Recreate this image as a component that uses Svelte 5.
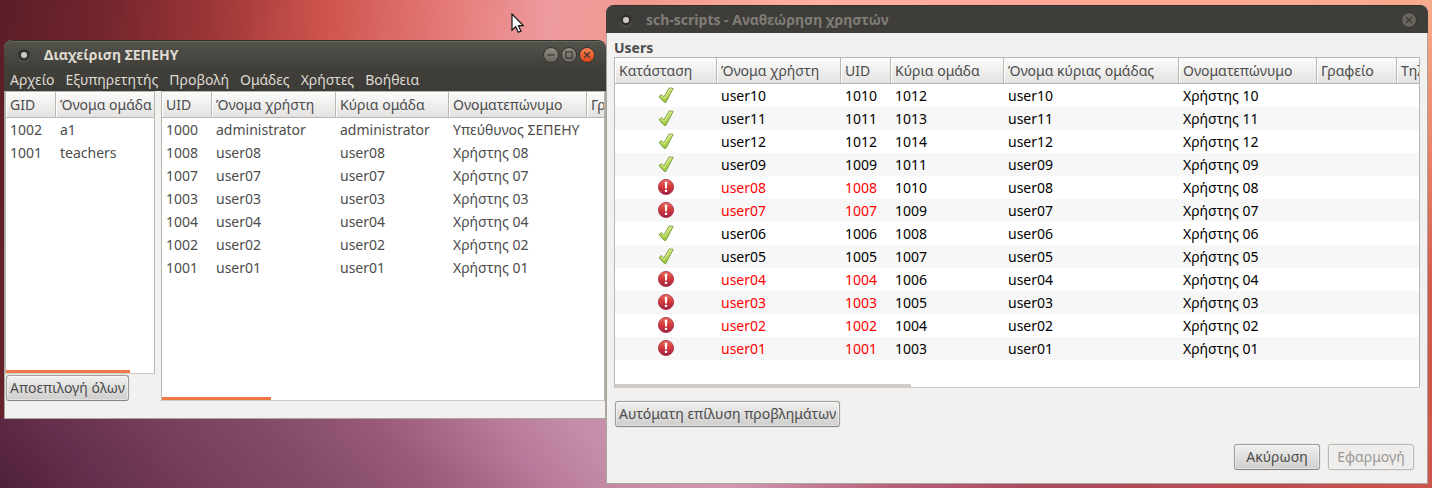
<script>
  const menus = ['Αρχείο', 'Εξυπηρετητής', 'Προβολή', 'Ομάδες', 'Χρήστες', 'Βοήθεια'];

  const groups = [
    ['1002', 'a1'],
    ['1001', 'teachers']
  ];

  const accounts = [
    ['1000', 'administrator', 'administrator', 'Υπεύθυνος ΣΕΠΕΗΥ'],
    ...['08', '07', '03', '04', '02', '01'].map((n) => ['10' + n, 'user' + n, 'user' + n, 'Χρήστης ' + n])
  ];

  const review = [
    { n: '10', gid: '1012', ok: true },
    { n: '11', gid: '1013', ok: true },
    { n: '12', gid: '1014', ok: true },
    { n: '09', gid: '1011', ok: true },
    { n: '08', gid: '1010', ok: false },
    { n: '07', gid: '1009', ok: false },
    { n: '06', gid: '1008', ok: true },
    { n: '05', gid: '1007', ok: true },
    { n: '04', gid: '1006', ok: false },
    { n: '03', gid: '1005', ok: false },
    { n: '02', gid: '1004', ok: false },
    { n: '01', gid: '1003', ok: false }
  ];
</script>

<div class="desktop">
  <section class="window main" aria-label="Διαχείριση ΣΕΠΕΗΥ">
    <header class="titlebar">
      <span class="dot"></span>
      <h1>Διαχείριση ΣΕΠΕΗΥ</h1>
      <button class="ctl" aria-label="Ελαχιστοποίηση">
        <svg viewBox="0 0 16 16"><path d="M4 8h8" /></svg>
      </button>
      <button class="ctl" aria-label="Μεγιστοποίηση">
        <svg viewBox="0 0 16 16"><path d="M4.5 4.5h7v7h-7z" /></svg>
      </button>
      <button class="ctl close" aria-label="Κλείσιμο">
        <svg viewBox="0 0 16 16"><path d="M4.8 4.8l6.4 6.4M11.2 4.8l-6.4 6.4" /></svg>
      </button>
    </header>
    <nav class="menubar">
      {#each menus as m}<button>{m}</button>{/each}
    </nav>
    <div class="panes">
      <div class="side">
        <div class="list groups">
          <table>
            <colgroup><col class="w50" /><col class="w124" /></colgroup>
            <thead><tr><th>GID</th><th>Όνομα ομάδα</th></tr></thead>
            <tbody>
              {#each groups as row}
                <tr>{#each row as c}<td>{c}</td>{/each}</tr>
              {/each}
            </tbody>
          </table>
          <div class="scroll wide"></div>
        </div>
        <button class="btn">Αποεπιλογή όλων</button>
      </div>
      <div class="list accounts">
        <table>
          <colgroup>
            <col class="w50" /><col class="w124" /><col class="w113" /><col class="w138" /><col class="w80" />
          </colgroup>
          <thead>
            <tr><th>UID</th><th>Όνομα χρήστη</th><th>Κύρια ομάδα</th><th>Ονοματεπώνυμο</th><th>Γραφείο</th></tr>
          </thead>
          <tbody>
            {#each accounts as row}
              <tr>{#each row as c}<td>{c}</td>{/each}<td></td></tr>
            {/each}
          </tbody>
        </table>
        <div class="scroll short"></div>
      </div>
    </div>
  </section>

  <section class="window dialog" aria-label="sch-scripts - Αναθεώρηση χρηστών">
    <header class="titlebar">
      <span class="dot"></span>
      <h1>sch-scripts - Αναθεώρηση χρηστών</h1>
      <button class="ctl" aria-label="Κλείσιμο">
        <svg viewBox="0 0 16 16"><path d="M4.8 4.8l6.4 6.4M11.2 4.8l-6.4 6.4" /></svg>
      </button>
    </header>
    <div class="body">
      <h2>Users</h2>
      <div class="list review">
        <table>
          <colgroup>
            <col class="w102" /><col class="w124" /><col class="w50" /><col class="w113" />
            <col class="w175" /><col class="w138" /><col class="w80" /><col class="w80" />
          </colgroup>
          <thead>
            <tr>
              <th>Κατάσταση</th><th>Όνομα χρήστη</th><th>UID</th><th>Κύρια ομάδα</th>
              <th>Όνομα κύριας ομάδας</th><th>Ονοματεπώνυμο</th><th>Γραφείο</th><th>Τηλέφωνο</th>
            </tr>
          </thead>
          <tbody>
            {#each review as r}
              <tr class:bad={!r.ok}>
                <td class="state">
                  {#if r.ok}
                    <svg viewBox="0 0 16 16" role="img" aria-label="OK">
                      <path d="M1 9.6 3.4 7.6 5.8 9.9 11.3.9 15.2 1.4 7.9 15.4 6 15.2Z" fill="url(#leaf)" stroke="#7da04a" stroke-linejoin="round" />
                      <path d="M2.7 9.6 3.5 8.9 6 11.4 11.9 2 13.6 2.2" fill="none" stroke="#e4f2a0" stroke-width=".8" />
                    </svg>
                  {:else}
                    <svg viewBox="0 0 16 16" role="img" aria-label="Πρόβλημα">
                      <circle cx="8" cy="8" r="7.6" fill="url(#ruby)" stroke="#a82b3c" stroke-width=".8" />
                      <path d="M6.7 2.8h2.6L8.9 9.6H7.1z" fill="#fff" />
                      <rect x="6.9" y="10.8" width="2.2" height="2.2" rx=".5" fill="#fff" />
                    </svg>
                  {/if}
                </td>
                <td class="flag">user{r.n}</td>
                <td class="flag">10{r.n}</td>
                <td>{r.gid}</td>
                <td>user{r.n}</td>
                <td>Χρήστης {r.n}</td>
                <td></td>
                <td></td>
              </tr>
            {/each}
          </tbody>
        </table>
        <div class="scroll idle"></div>
      </div>
      <button class="btn solve">Αυτόματη επίλυση προβλημάτων</button>
      <footer>
        <button class="btn action">Ακύρωση</button>
        <button class="btn action" disabled>Εφαρμογή</button>
      </footer>
    </div>
  </section>

  <svg class="pointer" viewBox="0 0 13 21" aria-hidden="true">
    <path d="M1 1v16.2l3.7-3.5 2.5 5.6 2.7-1.2-2.4-5.4h4.8z" fill="#fff" stroke="#111" stroke-width="1.2" />
  </svg>
  <svg class="defs" aria-hidden="true">
    <defs>
      <linearGradient id="leaf" x1="0" y1="0" x2="0" y2="1">
        <stop offset="0" stop-color="#d3e77a" /><stop offset="1" stop-color="#9cc53a" />
      </linearGradient>
      <linearGradient id="ruby" x1="0" y1="0" x2="0" y2="1">
        <stop offset="0" stop-color="#ea6a5c" /><stop offset=".5" stop-color="#d2383b" /><stop offset="1" stop-color="#a01f45" />
      </linearGradient>
    </defs>
  </svg>
</div>

<style>
  :global(body) { margin: 0; }
  .desktop {
    position: relative;
    box-sizing: border-box;
    min-height: 100vh;
    padding: 5px 4px 4px;
    display: grid;
    grid-template-columns: 602fr 822fr;
    overflow: hidden;
    font: 14px/20px "Noto Sans", "Open Sans", sans-serif;
    color: #4c4c4c;
    background:
      linear-gradient(50deg, #50203b 0, #65304d 7%, #753e5a 14%, #824a66 21%, #985a78 29%, #b87a9a 37%, #c48ca6 42%, #d098b2 49%, #b8607a 60%, #a94a5e 70%, #c04c50 86%, #d1584c 100%) left bottom / 100% 70px no-repeat,
      linear-gradient(180deg, #f7ab8b 0, #ea8369 30%, #d1594a 60%, #cb5045 100%) right top / 4px 100% no-repeat,
      linear-gradient(97deg, #5b1d28 0, #73252d 7%, #9a3537 14%, #cf544e 22%, #e47a77 30%, #ee9b9f 37%, #f2998f 43%, #ffb0a2 55%, #ffa696 70%, #f7ab8b 100%);
  }
  .window {
    box-sizing: border-box;
    min-width: 0;
    display: flex;
    flex-direction: column;
    background: #f2f1f0;
    border: 1px solid #a8a69f;
    border-top: 0;
    border-radius: 8px 8px 0 0;
  }
  .main { align-self: start; margin-top: 35px; }
  .titlebar {
    display: flex;
    align-items: center;
    gap: 2px;
    height: 28px;
    margin: 0 -1px;
    padding: 0 11px 0 14px;
    box-sizing: border-box;
    border-radius: 8px 8px 0 0;
    background: #3e3d39;
    border-top: 1px solid #33322f;
  }
  .main .titlebar {
    background: linear-gradient(#53524b, #403f3a);
    box-shadow: inset 0 1px #66655d;
  }
  .dot {
    width: 6px;
    height: 6px;
    margin-right: 12px;
    border: 3px solid #33322f;
    border-radius: 50%;
    background: #cfccc4;
    box-shadow: 0 1px #66645d;
  }
  h1 {
    flex: 1;
    margin: 0;
    font-size: 14px;
    line-height: 20px;
    font-weight: 700;
    color: #dfdbd2;
    white-space: nowrap;
  }
  .dialog h1 { color: #807d77; }
  .ctl {
    width: 16px;
    height: 16px;
    padding: 0;
    border: 1px solid #35342f;
    border-radius: 50%;
    background: linear-gradient(#8f8d84, #68665f);
    display: flex;
  }
  .ctl svg { width: 14px; height: 14px; fill: none; stroke: #3a3934; stroke-width: 1.4; }
  .ctl.close { background: linear-gradient(#f58057, #dd4814); }
  .dialog .ctl { background: #66645d; }
  .menubar {
    display: flex;
    gap: 11px;
    height: 23px;
    margin: 0 -1px;
    padding: 0 6px;
    background: linear-gradient(#403f3a, #3c3b37);
  }
  .menubar button {
    padding: 0;
    border: 0;
    background: none;
    font: inherit;
    color: #dfdbd2;
    white-space: nowrap;
  }
  .panes {
    display: grid;
    grid-template-columns: 150px minmax(0, 1fr);
    gap: 6px;
    padding-bottom: 17px;
  }
  .side { display: flex; flex-direction: column; align-items: flex-start; gap: 1px; min-width: 0; }
  .list {
    box-sizing: border-box;
    width: 100%;
    display: flex;
    flex-direction: column;
    overflow: hidden;
    background: #fff;
    border: 1px solid #b9b7b2;
    border-bottom-color: #cfcdca;
  }
  .groups { min-height: 283px; }
  .accounts { min-height: 310px; }
  .review { min-height: 331px; color: #000; }
  table { table-layout: fixed; width: 0; border-collapse: separate; border-spacing: 0; }
  .w50 { width: 50px; }
  .w80 { width: 80px; }
  .w102 { width: 102px; }
  .w113 { width: 113px; }
  .w124 { width: 124px; }
  .w138 { width: 138px; }
  .w175 { width: 175px; }
  th {
    height: 25px;
    padding: 0 0 0 4px;
    text-align: left;
    font-weight: 400;
    color: #4c4c4c;
    white-space: nowrap;
    background: linear-gradient(#fcfcfc, #e3e2e0);
    border-right: 1px solid #b9b7b2;
    border-bottom: 1px solid #b9b7b2;
    box-shadow: inset 1px 1px #fff;
  }
  td { height: 23px; padding: 0 0 0 4px; white-space: nowrap; }
  .review tbody tr:nth-child(even) { background: #f7f7f7; }
  .bad .flag { color: #f00; }
  .state { padding: 0 0 2px; height: 21px; text-align: center; line-height: 0; }
  .state svg { width: 16px; height: 16px; }
  .scroll { height: 3px; margin-top: auto; background: #f07746; }
  .wide { width: 84%; }
  .short { width: 109px; }
  .idle { width: 296px; background: #d0cdcb; }
  .body { flex: 1; display: flex; flex-direction: column; align-items: flex-start; padding: 6px 7px 13px; }
  h2 { margin: 0; font-size: 14px; line-height: 18px; font-weight: 700; }
  .btn {
    height: 26px;
    box-sizing: border-box;
    padding: 0 3px;
    border: 1px solid #a09e9a;
    border-bottom-color: #888682;
    border-radius: 3px;
    background: linear-gradient(#f0f0ef, #cfcecd);
    box-shadow: inset 0 0 0 1px rgba(255, 255, 255, .4), 0 0 0 1px #eae9e7;
    font: inherit;
    color: #4c4c4c;
    white-space: nowrap;
  }
  .side .btn { margin-left: 1px; }
  .solve { margin: 13px 0 0 1px; }
  footer { align-self: flex-end; display: flex; gap: 8px; margin-top: auto; padding-right: 6px; }
  .action { min-width: 86px; }
  .btn:disabled { color: #9b9895; background: #eeedec; border-color: #b9b7b3; }
  .pointer { position: absolute; left: 511px; top: 13px; width: 13px; height: 21px; }
  .defs { position: absolute; width: 0; height: 0; }
</style>
